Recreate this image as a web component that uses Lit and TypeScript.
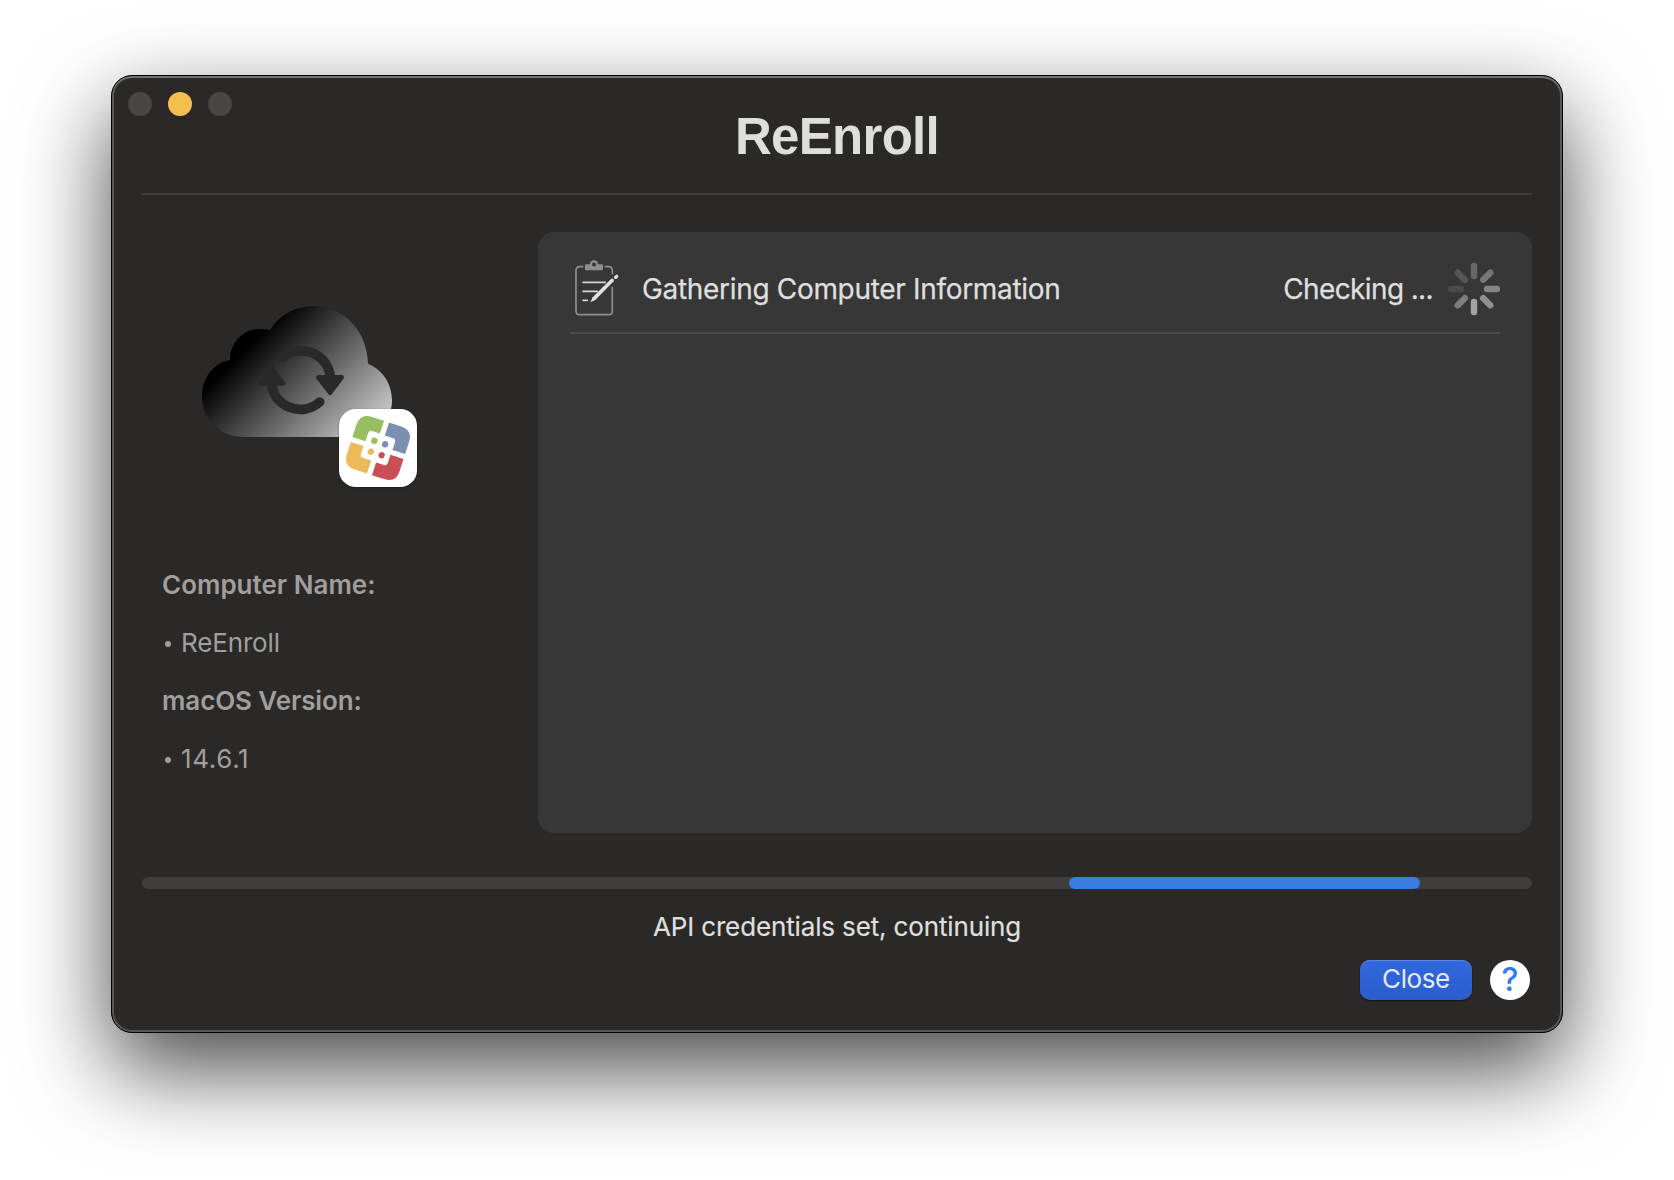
import { LitElement, html, css, svg } from "lit";
import { customElement, property } from "lit/decorators.js";

@customElement("brand-mark")
class BrandMark extends LitElement {
  static styles = css`
    :host { display: block; width: 240px; height: 210px; }
    svg { display: block; overflow: visible; }
    .tile { filter: drop-shadow(0 2px 3px rgba(0, 0, 0, 0.35)); }
  `;
  render() {
    const petals = [
      { a: 0, c: "#95bf60" },
      { a: 90, c: "#7b8fb3" },
      { a: 180, c: "#c94e56" },
      { a: 270, c: "#ecba59" },
    ];
    return html`<svg width="240" height="210" viewBox="0 0 720 630">
      <defs>
        <linearGradient id="shade" gradientUnits="userSpaceOnUse" x1="170" y1="170" x2="570" y2="570">
          <stop offset="0" stop-color="#000"></stop>
          <stop offset="1" stop-color="#fff"></stop>
        </linearGradient>
      </defs>
      <path fill="url(#shade)" d="M165 441C88 441 36 386 36 320C36 262 72 218 120 210C120 155 161 117 208 117C219 117 230 118 240 120C268 75 317 48 370 48C462 48 532 124 534 221C579 240 606 282 606 331C606 393 558 441 498 441Z"></path>
      <g fill="none" stroke="#2a2927" stroke-width="29" stroke-linecap="round">
        <path d="M276 203A88 88 0 0 1 421 262"></path>
        <path d="M243 278A88 88 0 0 0 389 336"></path>
      </g>
      <g fill="#2a2927" stroke="#2a2927" stroke-width="14" stroke-linejoin="round">
        <path d="M385 262H455L420 308Z"></path>
        <path d="M211 280H279L243 232Z"></path>
      </g>
      <rect class="tile" x="447" y="357" width="234" height="234" rx="50" fill="#fff"></rect>
      <g transform="translate(564 474) rotate(18)">
        ${petals.map(
          (p) => svg`<g transform="rotate(${p.a})" fill=${p.c}>
            <path d="M-8 -83V-43H-33Q-42 -43 -42 -34V-8H-83V-46Q-83 -83 -46 -83Z"></path>
            <circle cx="-17" cy="-17" r="9.5"></circle>
          </g>`
        )}
      </g>
    </svg>`;
  }
}

@customElement("clipboard-icon")
class ClipboardIcon extends LitElement {
  static styles = css`
    :host { display: block; width: 44px; height: 56px; margin-bottom: 2px; }
    svg { display: block; }
  `;
  render() {
    return html`<svg width="44" height="56" viewBox="135 104 132 168" fill="none">
      <path stroke="#8e8e8e" stroke-width="5" d="M160 124H150Q138 124 138 136V256Q138 268 150 268H235Q247 268 247 256V185M247 147V136Q247 124 235 124H224"></path>
      <path fill="#8e8e8e" fill-rule="evenodd" d="M169 117H180A12 12 0 0 1 204 117H215Q219 117 219 121V131Q219 135 215 135H169Q165 135 165 131V121Q165 117 169 117ZM192 111.500A6 6 0 1 0 192 123.500A6 6 0 1 0 192 111.500Z"></path>
      <path stroke="#d6d6d6" stroke-width="5" stroke-linecap="round" d="M159 171H226M159 198H202M159 225H172"></path>
      <path fill="#e2e2e2" d="M181 231L188 216L243 161Q247 158 250 161T251 168L196 224Z"></path>
      <path stroke="#e2e2e2" stroke-width="10" stroke-linecap="round" d="M257 156L260 153"></path>
    </svg>`;
  }
}

@customElement("busy-spinner")
class BusySpinner extends LitElement {
  static styles = css`
    :host { display: block; width: 52px; height: 54px; margin-bottom: 1px; }
    svg { display: block; }
  `;
  render() {
    const tones = ["#686868", "#777777", "#858585", "#909090", "#a2a2a2", "#7e7e7e", "#4a4a4a", "#565656"];
    return html`<svg width="52" height="54" viewBox="-26 -27 52 54">
      ${tones.map(
        (t, i) => svg`<line x1="0" y1="-23" x2="0" y2="-13" stroke=${t} stroke-width="6.400"
          stroke-linecap="round" transform="rotate(${i * 45})"></line>`
      )}
    </svg>`;
  }
}

@customElement("task-row")
class TaskRow extends LitElement {
  @property() label = "";
  @property() status = "";
  static styles = css`
    :host { display: block; }
    .row {
      display: flex; align-items: center; height: 100px; box-sizing: border-box;
      padding: 12px 0 0 5px; border-bottom: 2px solid #4c4c4c;
      color: #dfdfdf; font-size: 28px; line-height: 34px; white-space: nowrap;
      -webkit-text-stroke: 0.25px #dfdfdf;
    }
    .label { margin-left: 23px; letter-spacing: -0.32px; flex: 1; }
    .status { margin-right: 15px; letter-spacing: -0.63px; }
  `;
  render() {
    return html`<div class="row">
      <clipboard-icon></clipboard-icon>
      <span class="label">${this.label}</span>
      <span class="status">${this.status}</span>
      <busy-spinner></busy-spinner>
    </div>`;
  }
}

@customElement("app-root")
class AppRoot extends LitElement {
  private info = [
    { name: "Computer Name:", value: "ReEnroll", cls: "host" },
    { name: "macOS Version:", value: "14.6.1", cls: "version" },
  ];

  static styles = css`
    :host {
      display: block; box-sizing: border-box; width: 1674px; height: 1180px;
      padding: 75px 111px; background: #fff; overflow: hidden;
      font-family: Inter, "Liberation Sans", sans-serif;
    }
    .window {
      box-sizing: border-box; width: 1452px; height: 958px; padding: 16px 30px 0;
      border: 1px solid #000; border-radius: 21px; background: #2a2927;
      box-shadow: inset 0 2px 0 #70706f, inset 0 0 0 2px #585857, 0 36px 90px rgba(0, 0, 0, 0.72);
    }
    .lights { display: flex; gap: 16px; margin-left: -14px; }
    .light { width: 24px; height: 24px; border-radius: 50%; background: #484745; }
    .light.minimize { background: #f5bf4f; }
    .title {
      margin: 1px 0 0; text-align: center; color: #dededd;
      font: bold 51px/40px "Liberation Sans", sans-serif; letter-spacing: -0.7px;
    }
    .rule { height: 2px; margin-top: 36px; background: #3f3e3c; }
    .body { display: flex; margin-top: 37px; height: 601px; }
    .side { width: 396px; box-sizing: border-box; padding: 58px 0 0 20px; }
    .mark { margin-left: 28px; }
    .info { margin: 56px 0 0; font-size: 26px; line-height: 58px; color: #a09f9e; white-space: nowrap; }
    .name { font-weight: 600; }
    .name.version { letter-spacing: -0.1px; }
    .value { margin: 0; display: flex; align-items: center; letter-spacing: -0.15px; }
    .value.version { letter-spacing: 0.65px; }
    .bullet { width: 6px; height: 6px; margin: 2px 10px 0 3px; border-radius: 50%; background: #a09f9e; }
    .panel { flex: 1; box-sizing: border-box; padding: 2px 32px 0; border-radius: 16px; background: #373737; }
    .track { display: flex; height: 12px; margin-top: 44px; border-radius: 6px; background: #3f3e3c; }
    .fill { width: 351px; margin-left: 927px; border-radius: 6px; background: #3a7be0; }
    .message {
      margin-top: 22px; text-align: center; font-size: 26px;
      line-height: 32px; letter-spacing: -0.14px; color: #dfdfde;
      -webkit-text-stroke: 0.2px #dfdfde;
    }
    .footer { display: flex; justify-content: flex-end; gap: 18px; margin: 17px 2px 0 0; }
    .close {
      width: 112px; height: 40px; padding: 0 0 2px; border: 0; border-radius: 10px;
      color: #e4eafa; font: 26px/38px Inter, sans-serif; letter-spacing: -0.4px;
      background: linear-gradient(#3268df, #2a5cc9);
      box-shadow: inset 0 1px 0 #5c88e5, 0 1px 2px rgba(0, 0, 0, 0.5);
    }
    .help {
      width: 40px; height: 40px; padding: 0; border: 0; border-radius: 50%; background: #fff;
      color: #3478f6; font: 500 32px/40px Inter, sans-serif;
    }
  `;

  render() {
    return html`<div class="window">
      <div class="lights">
        <span class="light"></span><span class="light minimize"></span><span class="light"></span>
      </div>
      <h1 class="title">ReEnroll</h1>
      <div class="rule"></div>
      <div class="body">
        <div class="side">
          <brand-mark class="mark"></brand-mark>
          <div class="info">
            ${this.info.map(
              (i) => html`<div class="name ${i.cls}">${i.name}</div>
                <div class="value ${i.cls}"><span class="bullet"></span><span>${i.value}</span></div>`
            )}
          </div>
        </div>
        <div class="panel">
          <task-row label="Gathering Computer Information" status="Checking ..."></task-row>
        </div>
      </div>
      <div class="track"><div class="fill"></div></div>
      <div class="message">API credentials set, continuing</div>
      <div class="footer">
        <button class="close">Close</button>
        <button class="help">?</button>
      </div>
    </div>`;
  }
}
